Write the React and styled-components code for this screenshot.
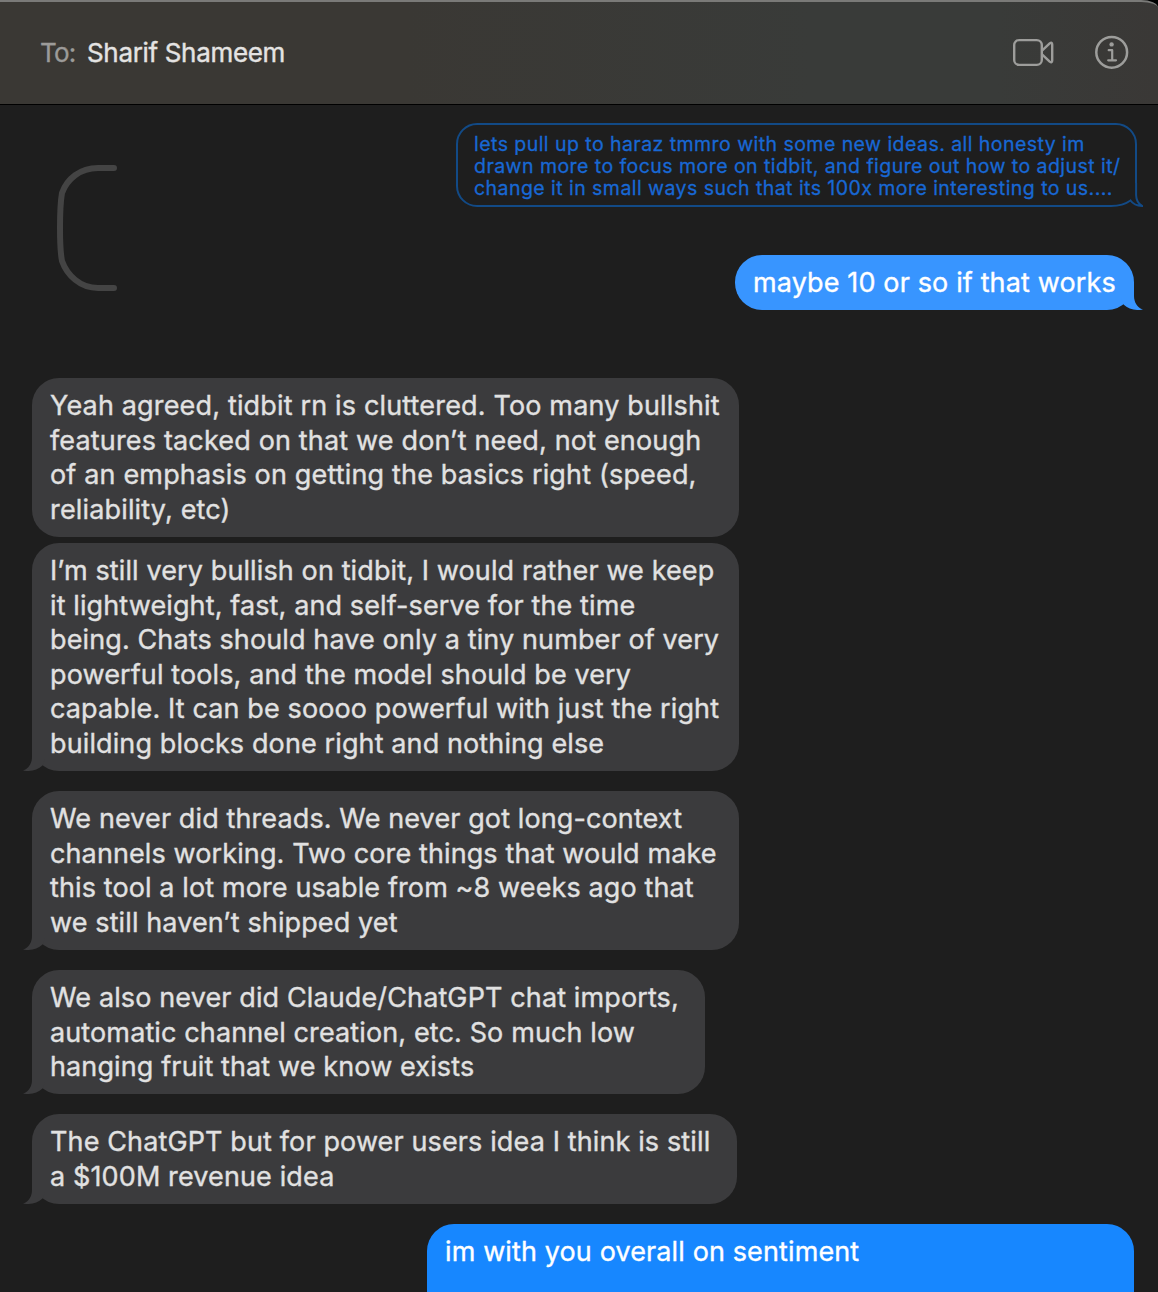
import React from 'react';
import styled, { createGlobalStyle, css } from 'styled-components';

const received = [
  {
    id: 1,
    width: 707,
    gap: 68,
    tracking: 0.16,
    lines: [
      'Yeah agreed, tidbit rn is cluttered. Too many bullshit',
      'features tacked on that we don’t need, not enough',
      'of an emphasis on getting the basics right (speed,',
      'reliability, etc)',
    ],
  },
  {
    id: 2,
    width: 707,
    gap: 6.2,
    tracking: 0.115,
    tail: true,
    lines: [
      'I’m still very bullish on tidbit, I would rather we keep',
      'it lightweight, fast, and self-serve for the time',
      'being. Chats should have only a tiny number of very',
      'powerful tools, and the model should be very',
      'capable. It can be soooo powerful with just the right',
      'building blocks done right and nothing else',
    ],
  },
  {
    id: 3,
    width: 707,
    gap: 20,
    tracking: 0.11,
    tail: true,
    lines: [
      'We never did threads. We never got long-context',
      'channels working. Two core things that would make',
      'this tool a lot more usable from ~8 weeks ago that',
      'we still haven’t shipped yet',
    ],
  },
  {
    id: 4,
    width: 673,
    gap: 20.3,
    tracking: 0.12,
    tail: true,
    lines: [
      'We also never did Claude/ChatGPT chat imports,',
      'automatic channel creation, etc. So much low',
      'hanging fruit that we know exists',
    ],
  },
  {
    id: 5,
    width: 705,
    gap: 20.2,
    tracking: 0.125,
    tail: true,
    lines: [
      'The ChatGPT but for power users idea I think is still',
      'a $100M revenue idea',
    ],
  },
];

const quoted = [
  'lets pull up to haraz tmmro with some new ideas. all honesty im',
  'drawn more to focus more on tidbit, and figure out how to adjust it/',
  'change it in small ways such that its 100x more interesting to us....',
];

const VideoIcon = () => (
  <svg width="44" height="36" viewBox="0 0 44 36" fill="none" stroke="#9d9d9b" strokeWidth="2.4" strokeLinejoin="round">
    <rect x="2.2" y="5.1" width="27.6" height="24.8" rx="5" />
    <path d="M30 15.6L37.7 8.4Q40.2 6.6 40.2 9.4V25.6Q40.2 28.4 37.7 26.6L30 19.4" />
  </svg>
);

const InfoIcon = () => (
  <svg width="36" height="36" viewBox="0 0 36 36" fill="none" stroke="#9d9d9b" strokeLinecap="round" strokeLinejoin="round">
    <circle cx="17.7" cy="17.3" r="15.4" strokeWidth="2.5" />
    <circle cx="17.6" cy="9.4" r="2.2" fill="#9d9d9b" stroke="none" />
    <path d="M14.7 15.2H18.2V25.2M14.2 25.3H22" strokeWidth="2.2" />
  </svg>
);

const ThreadLine = () => (
  <svg width="60" height="128" viewBox="0 0 60 128" fill="none" stroke="#444444" strokeWidth="6" strokeLinecap="round">
    <path d="M57 4H41C23 4 10 15 5 29C3.4 38 3 50 3 64C3 78 3.4 89 5 97C10 111 23 124 41 124H57" />
  </svg>
);

const App = () => {
  return (
    <Window>
      <GlobalStyle />
      <Header>
        <ToLabel>To:</ToLabel>
        <Recipient>Sharif Shameem</Recipient>
        <Actions>
          <VideoIcon />
          <InfoIcon />
        </Actions>
      </Header>
      <Messages>
        <Thread>
          <ThreadStart>
            <ThreadLine />
          </ThreadStart>
          <ThreadReplies>
            <Quote>
              {quoted.map((line) => (
                <Line key={line}>{line}</Line>
              ))}
              <QuoteTail width="38" height="24" viewBox="0 0 38 24" fill="none">
                <path d="M6 0H40V24H6Z" fill="#1e1e1e" />
                <path
                  d="M0 22.9H6C14 22.9 20 21.5 25.5 17.5C28 21 31.5 22.8 37 22.9C33 20.5 31.2 17 31.1 12V0"
                  stroke="#124a86"
                  strokeWidth="2"
                />
              </QuoteTail>
            </Quote>
            <Bubble $sent $color="#3895ff" $width={399} $gap={48} $tracking={0.13}>
              <Line>maybe 10 or so if that works</Line>
              <Tail $sent $color="#3895ff" />
            </Bubble>
          </ThreadReplies>
        </Thread>
        {received.map((message) => (
          <Bubble
            key={message.id}
            $width={message.width}
            $gap={message.gap}
            $tracking={message.tracking}
          >
            {message.lines.map((line) => (
              <Line key={line}>{line}</Line>
            ))}
            {message.tail && <Tail />}
          </Bubble>
        ))}
        <Bubble $sent $open $color="#1787ff" $width={707} $gap={20.2} $tracking={0.12}>
          <Line>im with you overall on sentiment</Line>
        </Bubble>
      </Messages>
    </Window>
  );
};

export default App;

const GlobalStyle = createGlobalStyle`
  * {
    box-sizing: border-box;
  }

  body {
    margin: 0;
    background: #000;
    font-family: Inter, 'Liberation Sans', sans-serif;
  }
`;

const Window = styled.div`
  display: flex;
  flex-direction: column;
  height: 100vh;
  overflow: hidden;
`;

const Header = styled.header`
  flex: none;
  display: flex;
  align-items: center;
  height: 104px;
  padding: 0 28px 0 40px;
  border-top: 2px solid #7a7a78;
  border-top-right-radius: 17px 8px;
  background: linear-gradient(to right, #3a3834 35%, #393b39 70%, #393b39 86%, #3a3836);
  font-size: 26px;
`;

const ToLabel = styled.span`
  width: 47px;
  padding-bottom: 2px;
  color: #9c9b99;
  letter-spacing: -0.8px;
  -webkit-text-stroke: 0.3px;
`;

const Recipient = styled.span`
  padding-bottom: 2px;
  color: #e4e3e2;
  letter-spacing: -0.33px;
  -webkit-text-stroke: 0.4px;
`;

const Actions = styled.div`
  display: flex;
  gap: 38px;
  margin-left: auto;

  svg {
    display: block;
  }
`;

const Messages = styled.main`
  flex: 1;
  display: flex;
  flex-direction: column;
  margin-top: 1px;
  padding: 18px 24px 0 32px;
  background: #1e1e1e;
  min-height: 0;
`;

const Thread = styled.section`
  flex: none;
  display: flex;
  justify-content: space-between;
  height: 187px;
`;

const ThreadStart = styled.div`
  padding: 41px 0 0 25px;
`;

const ThreadReplies = styled.div`
  display: flex;
  flex-direction: column;
  align-items: flex-end;
`;

const Line = styled.div`
  white-space: nowrap;
`;

const Quote = styled.div`
  position: relative;
  width: 681px;
  height: 84px;
  margin-right: -3px;
  padding: 8px 14px 6px 16px;
  border: 2px solid #124a86;
  border-radius: 21px;
  color: #1868d4;
  font-size: 19.5px;
  line-height: 22px;
  letter-spacing: 0.45px;
  -webkit-text-stroke: 0.3px;
`;

const QuoteTail = styled.svg`
  position: absolute;
  right: -8px;
  bottom: -2px;
`;

const Bubble = styled.div`
  flex: none;
  position: relative;
  width: ${(props) => props.$width}px;
  margin-top: ${(props) => props.$gap}px;
  padding: 11.1px 18px 9.3px;
  border-radius: 27px;
  background: ${(props) => props.$color || '#3b3b3d'};
  color: #e1e1e1;
  font-size: 27px;
  line-height: 34.6px;
  letter-spacing: ${(props) => props.$tracking}px;
  -webkit-text-stroke: 0.35px;

  ${(props) =>
    props.$sent &&
    css`
      align-self: flex-end;
      color: #fff;
    `}

  /* the last message carries on below the window */
  ${(props) =>
    props.$open &&
    css`
      height: 124px;
    `}
`;

const TailShape = styled.svg`
  position: absolute;
  bottom: 0;
  ${(props) => (props.$sent ? 'right: -9px; transform: scaleX(-1);' : 'left: -9px;')}
`;

const Tail = ({ $sent, $color = '#3b3b3d' }) => (
  <TailShape $sent={$sent} width="24" height="28" viewBox="0 0 24 28">
    <path d="M9 0V14C9 20 6 25.5 0 27.6C7 29 14.5 27 19.5 22.4L22 16V0Z" fill={$color} />
  </TailShape>
);
